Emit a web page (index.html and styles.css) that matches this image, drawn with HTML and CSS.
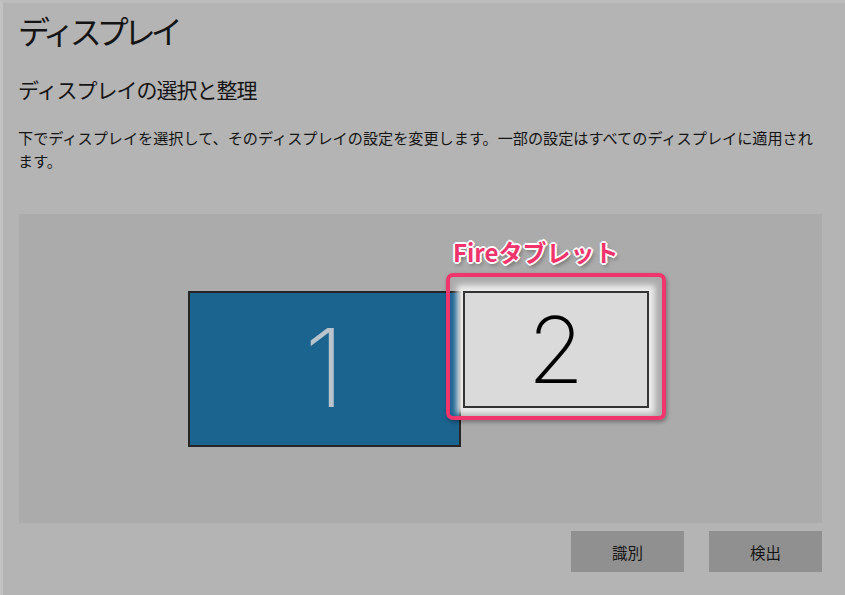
FILE: index.html
```html
<!DOCTYPE html>
<html lang="ja">
<head>
    <meta charset="UTF-8">
    <title>ディスプレイ</title>
    <link rel="stylesheet" href="styles.css">
</head>
<body>
    <div class="page">
        <h1>ディスプレイ</h1>
        <h2>ディスプレイの選択と整理</h2>
        <p class="desc">下でディスプレイを選択して、そのディスプレイの設定を変更します。一部の設定はすべてのディスプレイに適用されます。</p>

        <div class="arrange">
            <div class="monitor primary">1</div>
            <div class="monitor selected">2</div>
            <div class="highlight"></div>
            <div class="tag">Fireタブレット</div>
        </div>

        <div class="actions">
            <button type="button">識別</button>
            <button type="button">検出</button>
        </div>
    </div>
</body>
</html>
```

FILE: styles.css
```css
html, body {
    margin: 0;
    padding: 0;
    height: 100%;
}

body {
    background: #b4b4b4;
    color: #141414;
    font-family: "Noto Sans CJK JP", "Noto Sans", sans-serif;
}

.page {
    box-sizing: border-box;
    height: 595px;
    padding: 0 0 0 15px;
    border-left: 3px solid #c2c2c2;
    border-top: 3px solid #bdbdbd;
}

h1 {
    margin: 0;
    padding-top: 5px;
    font-size: 32px;
    font-weight: 400;
    letter-spacing: -5px;
    line-height: 44px;
}

h2 {
    margin: 22px 0 0;
    font-size: 21px;
    font-weight: 400;
    letter-spacing: -1px;
    line-height: 30px;
}

.desc {
    width: 805px;
    margin: 22px 0 0;
    font-size: 15.15px;
    line-height: 23px;
}

.arrange {
    position: relative;
    width: 803px;
    height: 309px;
    margin-top: 42px;
    margin-left: 1px;
    background: #ababab;
}

.monitor {
    position: absolute;
    top: 77px;
    box-sizing: border-box;
    border: 2px solid #262626;
    display: flex;
    align-items: center;
    justify-content: center;
    font-family: Inter, "Open Sans", sans-serif;
    font-weight: 200;
    line-height: 1;
}

.primary {
    left: 169px;
    width: 273px;
    height: 156px;
    background: #1c6490;
    color: #b8c3cb;
    font-size: 108px;
    padding-bottom: 2px;
}

.selected {
    left: 444px;
    width: 186px;
    height: 117px;
    background: #dadada;
    color: #000;
    font-size: 92px;
    border-color: #333;
    box-shadow: 0 0 6px 6px #ececec;
}

.highlight {
    position: absolute;
    left: 427px;
    top: 59px;
    width: 220px;
    height: 147px;
    box-sizing: border-box;
    border: 4px solid #f2346c;
    border-radius: 7px;
    box-shadow: 1px 2px 4px rgba(0, 0, 0, 0.35);
}

.tag {
    position: absolute;
    left: 434px;
    top: 20px;
    color: #f2346c;
    font-size: 24px;
    font-weight: 700;
    letter-spacing: 0;
    text-shadow:
        -2px 0 0 #fff, 2px 0 0 #fff, 0 -2px 0 #fff, 0 2px 0 #fff,
        -1px -1px 0 #fff, 1px 1px 0 #fff, -1px 1px 0 #fff, 1px -1px 0 #fff,
        2px 3px 4px rgba(0, 0, 0, 0.4);
}

.actions {
    display: flex;
    justify-content: flex-end;
    gap: 25px;
    width: 804px;
    margin-top: 8px;
}

.actions button {
    width: 113px;
    height: 41px;
    border: none;
    background: #909090;
    color: #141414;
    font-family: "Noto Sans CJK JP", sans-serif;
    font-size: 15.5px;
    padding: 0;
}
```
